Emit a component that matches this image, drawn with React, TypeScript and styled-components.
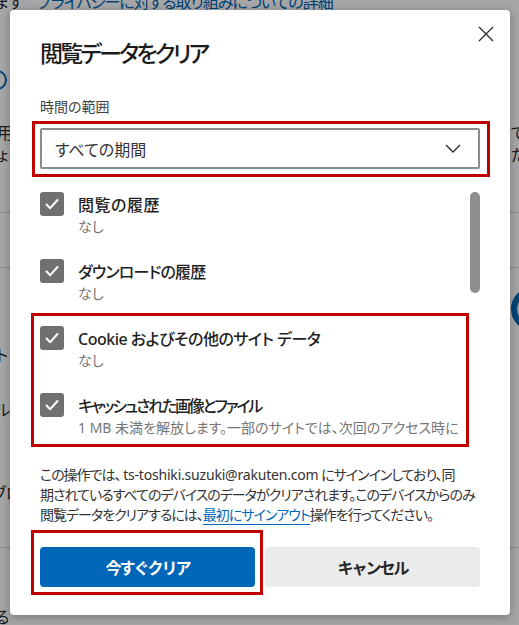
import styled, { createGlobalStyle } from "styled-components";

const GlobalStyle = createGlobalStyle`
  html, body {
    margin: 0;
    padding: 0;
  }
  body {
    font-family: "Noto Sans", "Noto Sans CJK JP", sans-serif;
    background: #ffffff;
    overflow: hidden;
  }
`;

type Option = { label: string; sub: string; tight?: number };

const topOptions: Option[] = [
  { label: "閲覧の履歴", sub: "なし", tight: 0.5 },
  { label: "ダウンロードの履歴", sub: "なし", tight: -0.8 },
];

const markedOptions: Option[] = [
  { label: "Cookie およびその他のサイト データ", sub: "なし", tight: -0.5 },
  {
    label: "キャッシュされた画像とファイル",
    sub: "1 MB 未満を解放します。一部のサイトでは、次回のアクセス時に",
    tight: -2.2,
  },
];

const App: React.FC = () => {
  return (
    <>
      <GlobalStyle />
      <Screen>
        {/* page behind the modal */}
        <BgPage>
          <BgRow $top={-8} $h={20}>
            <BgText $shift={-6}>ます</BgText>
            <BgText $blue $shift={14}>
              プライバシーに対する取り組みについての詳細
            </BgText>
          </BgRow>
          <BgRow $top={58} $h={20}>
            <SmallRing />
          </BgRow>
          <BgRow $top={33} $h={20}>
            <BgText $shift={-3}>用</BgText>
            <RightEdge>てい</RightEdge>
          </BgRow>
          <BgRow $top={2} $h={20}>
            <BgText $shift={-3}>ょ</BgText>
            <RightEdge>たい</RightEdge>
          </BgRow>
          <BgRule $top={47} />
          <BgRule $top={54} />
          <BgRow $top={19} $h={43}>
            <RightEdge>
              <BigRing />
            </RightEdge>
          </BgRow>
          <BgRow $top={15} $h={20}>
            <BgText $shift={-4}>ト</BgText>
          </BgRow>
          <BgRow $top={35} $h={20}>
            <BgText $shift={-5}>ル</BgText>
          </BgRow>
          <BgRow $top={63} $h={20}>
            <BgText $shift={-8}>ブロ</BgText>
          </BgRow>
          <BgRule $top={44} />
          <BgRow $top={59} $h={20}>
            <BgText $shift={-5}>る</BgText>
          </BgRow>
        </BgPage>
        <Overlay />

        <Dialog>
          <Header>
            <Title>閲覧データをクリア</Title>
            <CloseButton aria-label="閉じる">
              <svg width="16" height="16" viewBox="0 0 16 16">
                <path
                  d="M1 1 L15 15 M15 1 L1 15"
                  stroke="#2b2b2b"
                  strokeWidth="1.3"
                  fill="none"
                />
              </svg>
            </CloseButton>
          </Header>

          <FieldLabel>時間の範囲</FieldLabel>
          <SelectMark>
            <Select>
              <span>すべての期間</span>
              <svg width="16" height="9" viewBox="0 0 16 9">
                <path
                  d="M1 1 L8 8 L15 1"
                  stroke="#2b2b2b"
                  strokeWidth="1.4"
                  fill="none"
                />
              </svg>
            </Select>
          </SelectMark>

          <ListArea>
            <Items>
              {topOptions.map((o) => (
                <OptionRow key={o.label} option={o} />
              ))}
              <ItemsMark>
                {markedOptions.map((o) => (
                  <OptionRow key={o.label} option={o} />
                ))}
              </ItemsMark>
            </Items>
            <ScrollTrack>
              <ScrollThumb />
            </ScrollTrack>
          </ListArea>

          <Notice>
            この操作では、 <Mail>ts-toshiki.suzuki@rakuten.com</Mail>{" "}
            にサインインしており、同
            <br />
            期されているすべてのデバイスのデータがクリアされます。このデバイスからのみ
            <br />
            閲覧データをクリアするには、<NoticeLink>最初にサインアウト</NoticeLink>
            操作を行ってください。
          </Notice>

          <Buttons>
            <ButtonMark>
              <PrimaryButton>今すぐクリア</PrimaryButton>
            </ButtonMark>
            <SecondaryButton>キャンセル</SecondaryButton>
          </Buttons>
        </Dialog>
      </Screen>
    </>
  );
};

const OptionRow: React.FC<{ option: Option }> = ({ option }) => (
  <Row>
    <Checkbox>
      <svg width="24" height="24" viewBox="0 0 24 24">
        <path
          d="M6.5 12.5 L10.2 16.2 L17.5 8"
          stroke="#ffffff"
          strokeWidth="2"
          fill="none"
          strokeLinecap="round"
          strokeLinejoin="round"
        />
      </svg>
    </Checkbox>
    <RowText>
      <RowLabel $tight={option.tight ?? 0}>{option.label}</RowLabel>
      <RowSub>{option.sub}</RowSub>
    </RowText>
  </Row>
);

const Screen = styled.div`
  position: relative;
  width: 519px;
  height: 625px;
  overflow: hidden;
  font-feature-settings: "palt";
`;

// 背景のページ
const BgPage = styled.div`
  display: flex;
  flex-direction: column;
  width: 519px;
  font-size: 16px;
  color: #2b2b2b;
`;

const BgRow = styled.div<{ $top: number; $h: number }>`
  display: flex;
  align-items: center;
  margin-top: ${(p) => p.$top}px;
  height: ${(p) => p.$h}px;
  line-height: ${(p) => p.$h}px;
  white-space: nowrap;
`;

const BgText = styled.span<{ $blue?: boolean; $shift: number }>`
  margin-left: ${(p) => p.$shift}px;
  color: ${(p) => (p.$blue ? "#0067b8" : "#2b2b2b")};
  letter-spacing: ${(p) => (p.$blue ? "-1px" : "0")};
`;

const RightEdge = styled.span`
  margin-left: auto;
  width: 8px;
  flex-shrink: 0;
  display: flex;
  align-items: center;
  white-space: nowrap;
`;

const BgRule = styled.div<{ $top: number }>`
  margin-top: ${(p) => p.$top}px;
  height: 1px;
  background: #cfcfcf;
`;

const SmallRing = styled.span`
  width: 20px;
  height: 20px;
  box-sizing: border-box;
  border: 2px solid #0067b8;
  border-radius: 50%;
  margin-left: -13px;
`;

const BigRing = styled.span`
  flex-shrink: 0;
  width: 44px;
  height: 44px;
  box-sizing: border-box;
  border: 6px solid #0067b8;
  border-radius: 50%;
  background: #e8e8e8;
`;

const Overlay = styled.div`
  position: absolute;
  inset: 0;
  background: rgba(0, 0, 0, 0.35);
`;

// ダイアログ
const Dialog = styled.div`
  position: absolute;
  left: 10px;
  top: 10px;
  width: 500px;
  height: 605px;
  box-sizing: border-box;
  padding: 27px 30px 0;
  display: flex;
  flex-direction: column;
  background: #ffffff;
  border-radius: 4px;
  box-shadow: 0 2px 10px rgba(0, 0, 0, 0.3);
  color: #262626;
`;

const Header = styled.div`
  display: flex;
  justify-content: space-between;
  align-items: flex-start;
`;

const Title = styled.h1`
  margin: 0;
  font-size: 23px;
  line-height: 32px;
  letter-spacing: -2.8px;
  font-weight: 500;
  color: #1b1b1b;
`;

const CloseButton = styled.button`
  width: 32px;
  height: 32px;
  margin: -19px -22px 0 0;
  padding: 0;
  border: none;
  background: none;
  display: flex;
  align-items: center;
  justify-content: center;
`;

const FieldLabel = styled.div`
  margin-top: 28px;
  font-size: 14px;
  line-height: 20px;
  color: #404040;
`;

const SelectMark = styled.div`
  margin: 4px -10px 0 -8px;
  padding: 4px 7px 5px 5px;
  border: 3px solid #c00000;
`;

const Select = styled.div`
  height: 41px;
  box-sizing: border-box;
  border: 2px solid #8c8c8c;
  border-radius: 2px;
  padding: 0 17px 0 13px;
  display: flex;
  align-items: center;
  justify-content: space-between;
  font-size: 16px;
  color: #333333;
`;

const ListArea = styled.div`
  margin-top: 8px;
  display: flex;
`;

const Items = styled.div`
  flex: 1;
  padding-top: 7px;
  display: flex;
  flex-direction: column;
  gap: 22px;
`;

const ItemsMark = styled.div`
  margin: -13px 1px -9px -9px;
  padding: 10px 0 6px 6px;
  border: 3px solid #c00000;
  display: flex;
  flex-direction: column;
  gap: 22px;
`;

const Row = styled.div`
  display: flex;
  gap: 14px;
  height: 45px;
`;

const Checkbox = styled.div`
  width: 24px;
  height: 24px;
  flex-shrink: 0;
  border-radius: 3px;
  background: #707070;
`;

const RowText = styled.div`
  display: flex;
  flex-direction: column;
  min-width: 0;
`;

const RowLabel = styled.div<{ $tight: number }>`
  margin-top: 1px;
  font-size: 16px;
  line-height: 24px;
  font-weight: 500;
  letter-spacing: ${(p) => p.$tight}px;
  color: #1f1f1f;
  white-space: nowrap;
`;

const RowSub = styled.div`
  font-size: 14px;
  line-height: 20px;
  color: #767676;
  white-space: nowrap;
  overflow: hidden;
`;

const ScrollTrack = styled.div`
  width: 10px;
  flex-shrink: 0;
  padding-top: 7px;
`;

const ScrollThumb = styled.div`
  height: 101px;
  border-radius: 5px;
  background: #8e8e8e;
`;

const Notice = styled.p`
  margin: 27px 0 0;
  font-size: 14px;
  line-height: 20px;
  letter-spacing: -1px;
  color: #333333;
  white-space: nowrap;
`;

const Mail = styled.span`
  letter-spacing: -0.2px;
`;

const NoticeLink = styled.a`
  color: #0067b8;
  text-decoration: none;
  border-bottom: 1px solid #0067b8;
`;

const Buttons = styled.div`
  margin-top: 22px;
  display: flex;
  align-items: flex-start;
  gap: 10px;
`;

const ButtonMark = styled.div`
  margin: -17px -8px -8px -9px;
  padding: 14px 5px 5px 6px;
  border: 3px solid #c00000;
`;

const BaseButton = styled.button`
  width: 215px;
  height: 40px;
  border: none;
  border-radius: 4px;
  font-family: inherit;
  font-size: 16px;
  font-weight: 600;
  letter-spacing: -2px;
  padding: 0;
`;

const PrimaryButton = styled(BaseButton)`
  display: block;
  background: #0067b8;
  color: #ffffff;
`;

const SecondaryButton = styled(BaseButton)`
  background: #ebebeb;
  color: #262626;
`;

export default App;
